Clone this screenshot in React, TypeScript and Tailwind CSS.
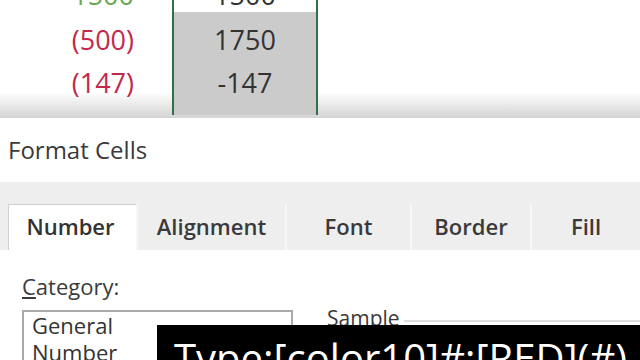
export default function App() {
  const tabs = [
    { label: "Number", w: "w-[128px]", active: true },
    { label: "Alignment", w: "w-[149px]" },
    { label: "Font", w: "w-[125px]" },
    { label: "Border", w: "w-[120px]" },
    { label: "Fill", w: "flex-1" },
  ];

  return (
    <div className="relative w-[640px] h-[360px] overflow-hidden bg-white font-['Open_Sans',sans-serif] text-[#333]">
      {/* Spreadsheet strip */}
      <div className="flex h-[118px] bg-gradient-to-b from-white from-[78%] to-[#d4d4d4]">
        <div className="w-[172px] flex flex-col items-end pr-[38px] text-[27px] leading-[43px] font-medium">
          <div className="h-[18px] relative w-full">
            <span className="absolute right-0 -top-[27px] text-[#6aa84f]">1500</span>
          </div>
          <div className="h-[43px] text-[#c2294b]">(500)</div>
          <div className="h-[43px] text-[#c2294b]">(147)</div>
        </div>
        <div className="w-[146px] h-[115px] border-x-2 border-[#2f6f4a] flex flex-col text-[27px] leading-[43px] text-center font-medium">
          <div className="h-[12px] bg-white relative">
            <span className="absolute inset-x-0 -top-[27px]">1500</span>
          </div>
          <div className="flex-1 bg-[#cbcbcb] pt-[6px]">
            <div className="h-[43px]">1750</div>
            <div className="h-[43px]">-147</div>
          </div>
        </div>
        <div className="flex-1" />
      </div>

      {/* Format Cells dialog */}
      <div className="bg-white">
        <div className="h-[64px] flex items-center pl-[8px] text-[24px] font-medium text-[#3a3a3a]">Format Cells</div>
        <div className="h-[22px] bg-[#eeeeee]" />
        <div className="flex h-[46px] bg-[#eeeeee]">
          {tabs.map((t) => (
            <div
              key={t.label}
              className={`${t.w} flex items-center justify-center text-[22px] font-semibold pb-[2px] ${
                t.active
                  ? "ml-[8px] bg-white border-l border-t border-[#cfcfcf] pr-[4px]"
                  : "border-l-2 border-[#f7f7f7] text-[#3a3a3a]"
              }`}
            >
              {t.label}
            </div>
          ))}
        </div>
        <div className="flex bg-white pl-[22px] pt-[22px]">
          <div className="w-[271px]">
            <div className="text-[22px] leading-[28px] font-medium text-[#3a3a3a]">
              <span className="underline underline-offset-2">C</span>ategory:
            </div>
            <div className="mt-[10px] border-2 border-[#a9a9a9] pl-[8px] text-[22px] leading-[27px] font-medium h-[80px]">
              <div>General</div>
              <div>Number</div>
            </div>
          </div>
          <div className="flex-1 mt-[32px] ml-[14px] flex items-start">
            <span className="text-[21px] leading-[28px] font-medium pl-[20px] pr-[4px] text-[#3a3a3a]">Sample</span>
            <div className="flex-1 mt-[16px] border-t-2 border-[#dcdcdc]" />
          </div>
        </div>
      </div>

      {/* Caption overlay */}
      <div className="absolute left-[157px] top-[325px] w-[483px] h-[40px] bg-black pl-[17px] text-white text-[40px] leading-[66px] whitespace-nowrap">
        Type:[color10]#;[RED](#)
      </div>
    </div>
  );
}
